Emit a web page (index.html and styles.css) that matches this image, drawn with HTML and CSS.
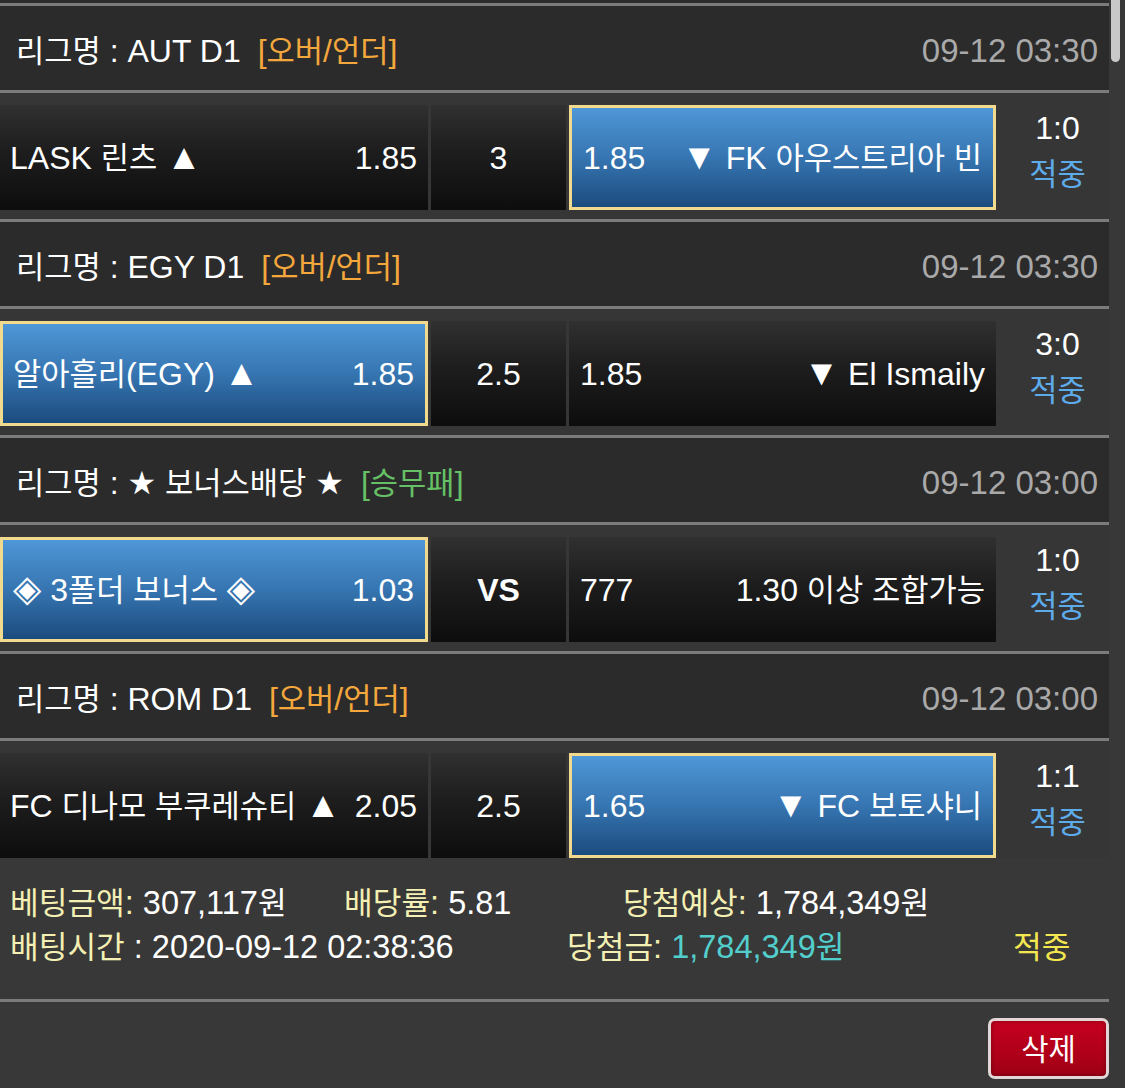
FILE: index.html
```html
<!DOCTYPE html>
<html lang="ko">
<head>
<meta charset="utf-8">
<title>배팅내역</title>
<link rel="stylesheet" href="styles.css">
</head>
<body>
<div class="page">
  <div class="bet">
    <div class="game">
      <div class="league">
        <div class="lname"><span class="k">리그명</span> : AUT D1<span class="tag ou">[<span class="k">오버</span>/<span class="k">언더</span>]</span></div>
        <div class="time">09-12 03:30</div>
      </div>
      <div class="match">
        <div class="cell side"><span>LASK <span class="k">린츠</span> <span class="tri">▲</span></span><span>1.85</span></div>
        <div class="cell mid">3</div>
        <div class="cell side right sel"><span>1.85</span><span><span class="tri">▼</span> FK <span class="k">아우스트리아 빈</span></span></div>
        <div class="score"><div>1:0</div><div class="hit"><span class="k">적중</span></div></div>
      </div>
    </div>

    <div class="game">
      <div class="league">
        <div class="lname"><span class="k">리그명</span> : EGY D1<span class="tag ou">[<span class="k">오버</span>/<span class="k">언더</span>]</span></div>
        <div class="time">09-12 03:30</div>
      </div>
      <div class="match">
        <div class="cell side sel"><span><span class="k">알아흘리</span>(EGY) <span class="tri">▲</span></span><span>1.85</span></div>
        <div class="cell mid">2.5</div>
        <div class="cell side right"><span>1.85</span><span><span class="tri">▼</span> El Ismaily</span></div>
        <div class="score"><div>3:0</div><div class="hit"><span class="k">적중</span></div></div>
      </div>
    </div>

    <div class="game">
      <div class="league">
        <div class="lname"><span class="k">리그명</span> : <span class="star">★</span> <span class="k">보너스배당</span> <span class="star">★</span><span class="tag wdl">[<span class="k">승무패</span>]</span></div>
        <div class="time">09-12 03:00</div>
      </div>
      <div class="match">
        <div class="cell side sel"><span><span class="dia">◈</span> 3<span class="k">폴더 보너스</span> <span class="dia">◈</span></span><span>1.03</span></div>
        <div class="cell mid vs">VS</div>
        <div class="cell side right"><span>777</span><span>1.30 <span class="k">이상 조합가능</span></span></div>
        <div class="score"><div>1:0</div><div class="hit"><span class="k">적중</span></div></div>
      </div>
    </div>

    <div class="game last">
      <div class="league">
        <div class="lname"><span class="k">리그명</span> : ROM D1<span class="tag ou">[<span class="k">오버</span>/<span class="k">언더</span>]</span></div>
        <div class="time">09-12 03:00</div>
      </div>
      <div class="match">
        <div class="cell side"><span>FC <span class="k">디나모 부쿠레슈티</span> <span class="tri">▲</span></span><span>2.05</span></div>
        <div class="cell mid">2.5</div>
        <div class="cell side right sel"><span>1.65</span><span><span class="tri">▼</span> FC <span class="k">보토샤니</span></span></div>
        <div class="score"><div>1:1</div><div class="hit"><span class="k">적중</span></div></div>
      </div>
    </div>

    <div class="summary">
      <div class="srow">
        <div class="sc c1"><span class="lbl"><span class="k">베팅금액</span>:</span> 307,117<span class="k">원</span></div>
        <div class="sc c2"><span class="lbl"><span class="k">배당률</span>:</span> 5.81</div>
        <div class="sc c3"><span class="lbl"><span class="k">당첨예상</span>:</span> 1,784,349<span class="k">원</span></div>
      </div>
      <div class="srow">
        <div class="sc d1"><span class="lbl"><span class="k">배팅시간</span></span> : 2020-09-12 02:38:36</div>
        <div class="sc d2"><span class="lbl"><span class="k">당첨금</span>:</span> <span class="won">1,784,349<span class="k">원</span></span></div>
        <div class="sc d3"><span class="k">적중</span></div>
      </div>
    </div>

    <div class="actions">
      <button class="del" type="button"><span class="k">삭제</span></button>
    </div>
  </div>
</div>
<div class="scroll-thumb"></div>
</body>
</html>
```

FILE: styles.css
```css
html, body {
  margin: 0;
  padding: 0;
}

body {
  background: #383838;
  color: #ffffff;
  font-family: "Liberation Sans", "DejaVu Sans", "Noto Sans CJK KR", sans-serif;
  font-size: 32px;
  overflow: hidden;
}

.page {
  width: 1109px;
  border-top: 3px solid #2c2c2c;
}

.k {
  font-family: "Noto Sans CJK KR", sans-serif;
  font-size: 0.96em;
  line-height: 1;
}

.tri {
  font-size: 1.12em;
  line-height: 1;
}

.dia {
  font-family: "DejaVu Sans", sans-serif;
  font-size: 1.15em;
  line-height: 1;
}

.star {
  font-family: "DejaVu Sans", sans-serif;
  line-height: 1;
}

.league {
  box-sizing: border-box;
  height: 90px;
  border-top: 3px solid #7b7b7b;
  border-bottom: 3px solid #7b7b7b;
  background: #2b2b2b;
  padding: 6px 11px 0 16px;
  display: flex;
  align-items: center;
  justify-content: space-between;
  line-height: 40px;
}

.lname {
  white-space: nowrap;
  font-size: 32px;
}

.tag {
  margin-left: 17px;
}

.ou {
  color: #f3a73c;
}

.wdl {
  color: #66c066;
}

.time {
  color: #a9a9a9;
  font-size: 33px;
}

.match {
  display: flex;
  align-items: flex-start;
  background: #363636;
  padding: 12px 0 9px 0;
}

.game.last .match {
  padding-bottom: 0;
}

.cell {
  box-sizing: border-box;
  height: 105px;
  background: linear-gradient(to bottom, #303030 0%, #1d1d1d 45%, #0d0d0d 100%);
  display: flex;
  align-items: center;
  line-height: 40px;
  white-space: nowrap;
}

.side {
  width: 428px;
  padding: 0 11px 0 10px;
  justify-content: space-between;
}

.side.right {
  width: 427px;
  padding: 0 11px 0 11px;
}

.mid {
  width: 135px;
  margin: 0 3px;
  justify-content: center;
}

.vs {
  font-weight: bold;
}

.sel {
  border: 3px solid #f1d98e;
  background: linear-gradient(to bottom, #4f97d7 0%, #3675b1 50%, #1c4c7e 100%);
}

.score {
  flex: 1;
  padding-left: 10px;
  text-align: center;
  line-height: 46px;
}

.hit {
  color: #5eabea;
}

.summary {
  padding: 23px 0 30px 10px;
  border-bottom: 3px solid #7b7b7b;
  line-height: 44px;
  font-size: 32.5px;
}

.srow {
  display: flex;
  white-space: nowrap;
  height: 44px;
}

.lbl {
  color: #f4efb2;
}

.c1 { width: 334px; }
.c2 { width: 279px; }
.d1 { width: 557px; }
.d2 { width: 446px; }

.won {
  color: #52cfcc;
}

.d3 {
  color: #f4e64e;
}

.actions {
  display: flex;
  justify-content: flex-end;
  padding-top: 16px;
}

.del {
  box-sizing: border-box;
  width: 121px;
  height: 61px;
  border: 3px solid #e3d6d6;
  border-radius: 7px;
  background: linear-gradient(to bottom, #c4001f 0%, #b00019 60%, #9c0015 100%);
  box-shadow: inset 0 0 4px rgba(0, 0, 0, 0.35);
  color: #ffffff;
  font-family: "Noto Sans CJK KR", sans-serif;
  font-size: 31px;
  line-height: 1;
  padding: 0 0 3px 0;
  cursor: pointer;
}

.scroll-thumb {
  position: fixed;
  top: 0;
  right: 5px;
  width: 9px;
  height: 62px;
  border-radius: 0 0 5px 5px;
  background: #c9c9c9;
}
```
